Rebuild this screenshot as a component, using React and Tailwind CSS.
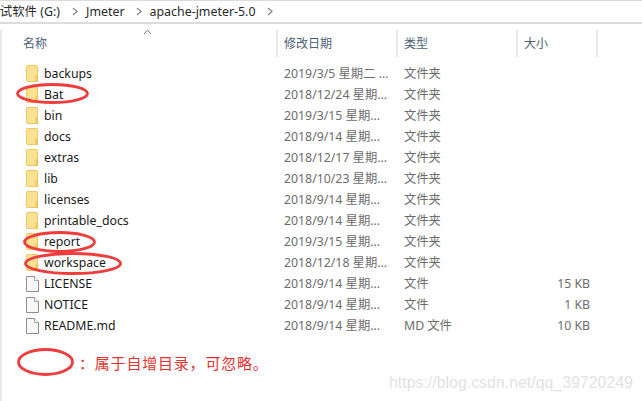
const FONT = { fontFamily: '"Noto Sans","Noto Sans CJK SC",sans-serif' };

function Folder() {
  return (
    <svg width="14" height="17" viewBox="0 0 14 17" className="shrink-0">
      <path d="M0.5 1.5 Q0.5 0.5 1.5 0.5 H10.5 Q11.5 0.5 11.5 1.5 V16.5 H1.5 Q0.5 16.5 0.5 15.5 Z" fill="#fde293" stroke="#eec85f" />
      <path d="M10 11 H11.5 V16.5 H10 Z" fill="#fbd97c" stroke="#e6bf55" strokeWidth="1" />
    </svg>
  );
}

function FileIcon() {
  return (
    <svg width="13" height="16" viewBox="0 0 13 16" className="shrink-0">
      <path d="M0.5 0.5 H8.5 L12.5 4.5 V15.5 H0.5 Z" fill="#f8f8f8" stroke="#8f8f8f" />
      <path d="M8.5 0.5 V4.5 H12.5" fill="#fff" stroke="#a8a8a8" />
    </svg>
  );
}

function Chevron() {
  return (
    <svg width="6" height="9" viewBox="0 0 6 9">
      <path d="M1 1 L5 4.5 L1 8" fill="none" stroke="#858585" strokeWidth="1.2" />
    </svg>
  );
}

function Oval({ className, w, h }) {
  return (
    <svg width={w} height={h} viewBox={`0 0 ${w} ${h}`} className={className}>
      <ellipse cx={w / 2} cy={h / 2} rx={w / 2 - 1.5} ry={h / 2 - 1.5} fill="none" stroke="#f03c3c" strokeWidth="2.8" />
    </svg>
  );
}

const rows = [
  ["backups", "2019/3/5 星期二 ...", "文件夹", "", 0],
  ["Bat", "2018/12/24 星期...", "文件夹", "", 0],
  ["bin", "2019/3/15 星期...", "文件夹", "", 0],
  ["docs", "2018/9/14 星期...", "文件夹", "", 0],
  ["extras", "2018/12/17 星期...", "文件夹", "", 0],
  ["lib", "2018/10/23 星期...", "文件夹", "", 0],
  ["licenses", "2018/9/14 星期...", "文件夹", "", 0],
  ["printable_docs", "2018/9/14 星期...", "文件夹", "", 0],
  ["report", "2019/3/15 星期...", "文件夹", "", 0],
  ["workspace", "2018/12/18 星期...", "文件夹", "", 0],
  ["LICENSE", "2018/9/14 星期...", "文件", "15 KB", 1],
  ["NOTICE", "2018/9/14 星期...", "文件", "1 KB", 1],
  ["README.md", "2018/9/14 星期...", "MD 文件", "10 KB", 1],
];

export default function App() {
  return (
    <div className="relative w-[642px] h-[401px] overflow-hidden bg-white text-[12.3px] leading-[21px]" style={FONT}>
      <div className="flex items-center h-[24px] border-t border-b-2 border-[#dcdcdc] text-[12.4px] text-[#2a2a2a] whitespace-nowrap">
        <span className="w-[60px] overflow-hidden flex justify-end shrink-0">试软件 (G:)</span>
        <span className="ml-[12px] flex"><Chevron /></span>
        <span className="ml-[8px]">Jmeter</span>
        <span className="ml-[11px] flex"><Chevron /></span>
        <span className="ml-[8px]">apache-jmeter-5.0</span>
        <span className="ml-[11px] flex"><Chevron /></span>
      </div>

      <div className="flex h-[377px]">
        <div className="w-[2px] mt-[6px] bg-[#e8e8e8] shrink-0" />
        <div className="flex-1 min-w-0">
          <div className="relative flex h-[27px] mt-[6px] text-[12px] text-[#4c607a] leading-[27px]">
            <svg width="9" height="6" viewBox="0 0 9 6" className="absolute left-[141px] -top-[1px]">
              <path d="M1 5 L4.5 1 L8 5" fill="none" stroke="#7a7a7a" strokeWidth="1" />
            </svg>
            <div className="w-[276px] pl-[21px] border-r-2 border-[#e8e8e8] shrink-0">名称</div>
            <div className="w-[120px] pl-[6px] border-r-2 border-[#e8e8e8] shrink-0">修改日期</div>
            <div className="w-[120px] pl-[6px] border-r-2 border-[#e8e8e8] shrink-0">类型</div>
            <div className="w-[80px] pl-[6px] border-r-2 border-[#e8e8e8] shrink-0">大小</div>
          </div>
          <div className="mt-[6px]">
            {rows.map(([name, date, type, size, isFile]) => (
              <div key={name} className="flex h-[21px] items-center whitespace-nowrap">
                <div className="w-[275px] shrink-0 flex items-center pl-[24px] text-[#1b1b1b]">
                  <span className="w-[18px] flex">{isFile ? <FileIcon /> : <Folder />}</span>
                  <span>{name}</span>
                </div>
                <div className="w-[120px] shrink-0 pl-[7px] text-[#6d6d6d]">{date}</div>
                <div className="w-[120px] shrink-0 pl-[7px] text-[#6d6d6d]">{type}</div>
                <div className="w-[73px] shrink-0 text-right text-[#6d6d6d]">{size}</div>
              </div>
            ))}
          </div>
          <div className="flex items-center mt-[12px] ml-[15px]">
            <Oval w={57} h={28} />
            <span className="ml-[5px] text-[15px] tracking-[0.8px] text-[#e8322f] translate-y-[1px]">：属于自增目录，可忽略。</span>
          </div>
        </div>
      </div>

      <Oval className="absolute left-[16px] top-[83px]" w={73} h={21} />
      <Oval className="absolute left-[23px] top-[231px]" w={73} h={22} />
      <Oval className="absolute left-[24px] top-[252px]" w={98} h={23} />
      <span className="absolute left-[389px] top-[373px] text-[15.9px] leading-[20px] text-[#e2e2e2] whitespace-nowrap" style={{ fontFamily: '"Liberation Sans",sans-serif' }}>https://blog.csdn.net/qq_39720249</span>
    </div>
  );
}
